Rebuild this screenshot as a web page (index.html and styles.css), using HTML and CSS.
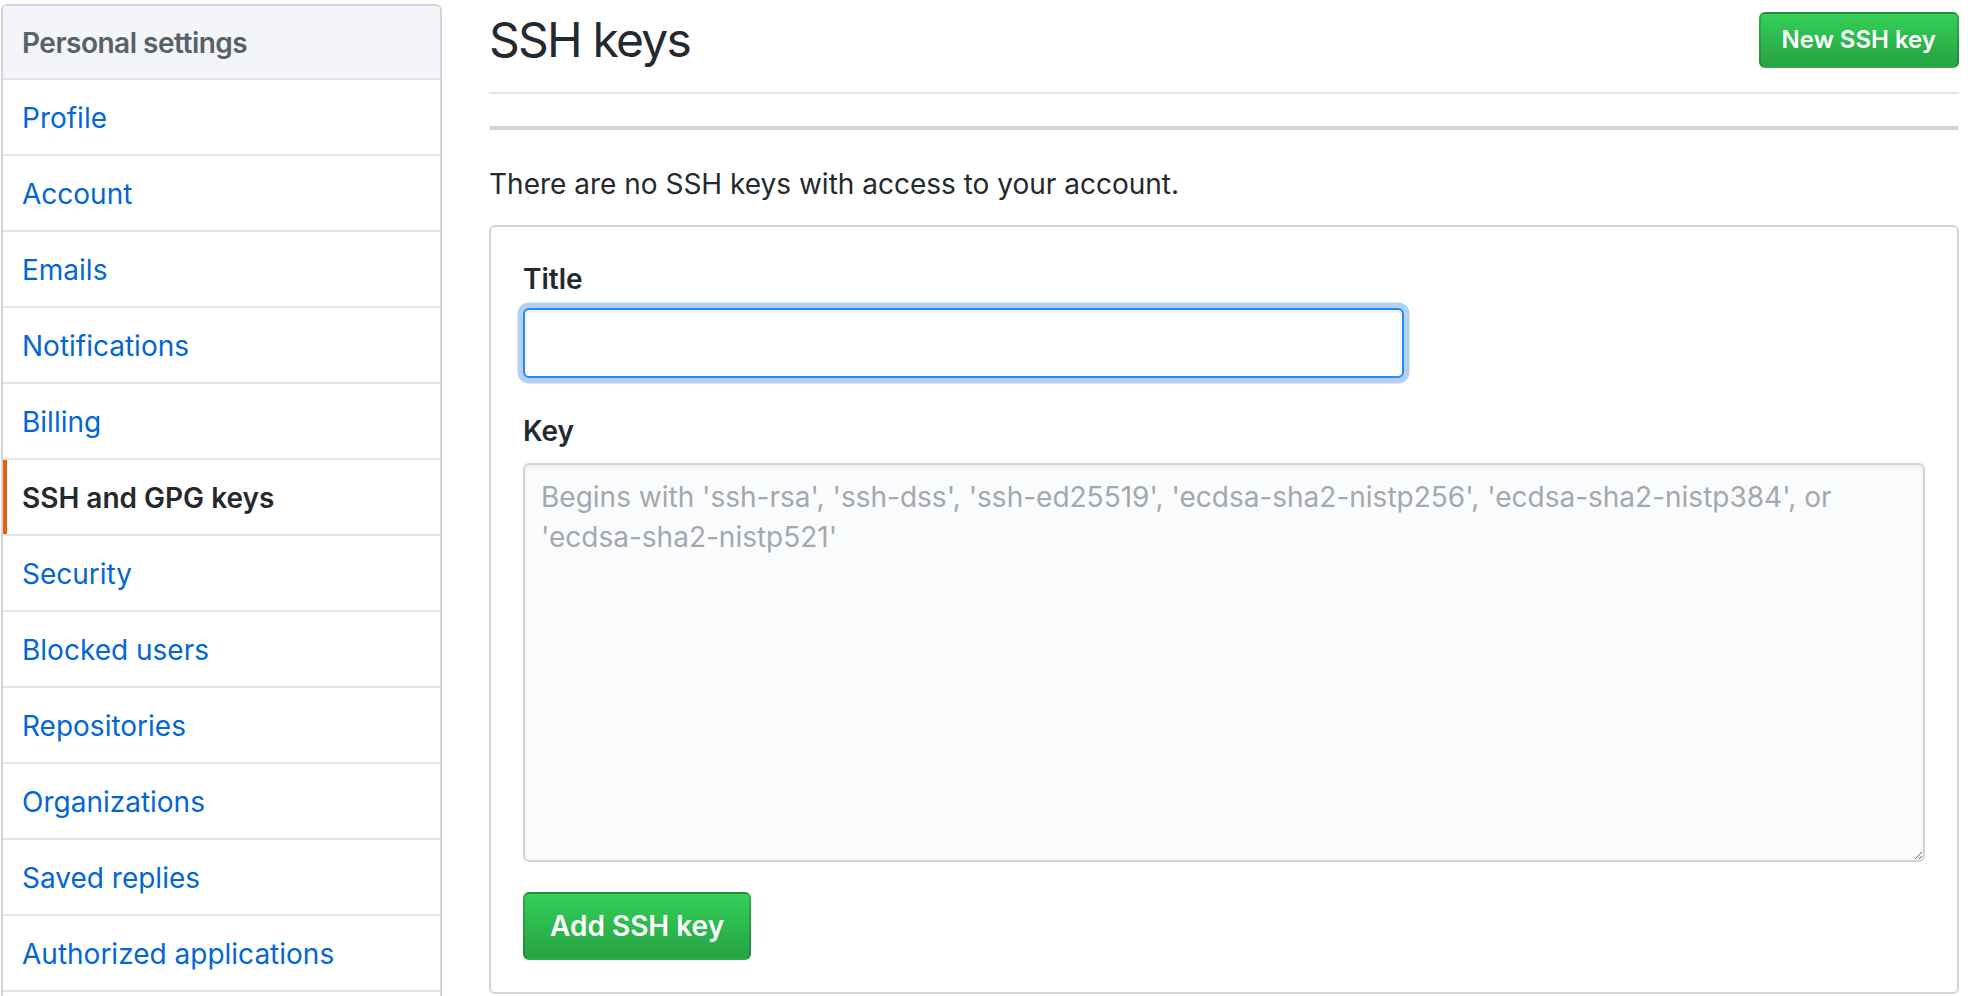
FILE: index.html
```html
<!DOCTYPE html>
<html lang="en">
<head>
<meta charset="utf-8">
<title>SSH keys</title>
<link rel="stylesheet" href="styles.css">
</head>
<body>
<div class="page">
  <nav class="sidebar">
    <h3 class="menu-heading">Personal settings</h3>
    <a class="menu-item" href="#">Profile</a>
    <a class="menu-item" href="#">Account</a>
    <a class="menu-item" href="#">Emails</a>
    <a class="menu-item" href="#">Notifications</a>
    <a class="menu-item" href="#">Billing</a>
    <a class="menu-item selected" href="#">SSH and GPG keys</a>
    <a class="menu-item" href="#">Security</a>
    <a class="menu-item" href="#">Blocked users</a>
    <a class="menu-item" href="#">Repositories</a>
    <a class="menu-item" href="#">Organizations</a>
    <a class="menu-item" href="#">Saved replies</a>
    <a class="menu-item" href="#">Authorized applications</a>
  </nav>
  <main class="main">
    <div class="subhead">
      <h2 class="subhead-heading">SSH keys</h2>
      <a class="btn btn-sm" href="#">New SSH key</a>
    </div>
    <div class="listgroup"></div>
    <p class="blank-note">There are no SSH keys with access to your account.</p>
    <form class="box">
      <div class="form-group">
        <label class="form-label" for="title">Title</label>
        <input class="form-control focused" id="title" type="text">
      </div>
      <div class="form-group">
        <label class="form-label key-label" for="key">Key</label>
        <textarea class="form-textarea" id="key" placeholder="Begins with 'ssh-rsa', 'ssh-dss', 'ssh-ed25519', 'ecdsa-sha2-nistp256', 'ecdsa-sha2-nistp384', or 'ecdsa-sha2-nistp521'"></textarea>
      </div>
      <button class="btn btn-lg" type="button">Add SSH key</button>
    </form>
  </main>
</div>
</body>
</html>
```
FILE: styles.css
```css
html, body {
  margin: 0;
  height: 100%;
  overflow: hidden;
  background: #fff;
}

body {
  font-family: Inter, "Liberation Sans", sans-serif;
  font-size: 28px;
  line-height: 1.5;
  color: #24292e;
}

.page {
  display: flex;
  align-items: flex-start;
  gap: 47px;
  padding: 4px 9px 0 1px;
}

/* Sidebar */
.sidebar {
  flex: none;
  width: 441px;
  box-sizing: border-box;
  border: 2px solid #d1d5da;
  border-radius: 6px;
  padding-bottom: 60px;
}

.menu-heading {
  margin: 0;
  padding: 17px 19px 15px;
  font-size: 28px;
  line-height: 40px;
  font-weight: 600;
  letter-spacing: -0.5px;
  color: #586069;
  background: #f3f5f8;
  border-bottom: 2px solid #e1e4e8;
  border-radius: 4px 4px 0 0;
}

.menu-item {
  display: block;
  position: relative;
  padding: 17px 19px 15px;
  line-height: 42px;
  color: #0366d6;
  text-decoration: none;
  border-bottom: 2px solid #e1e4e8;
}

.menu-item.selected {
  font-weight: 600;
  color: #24292e;
}

.menu-item.selected::before {
  content: "";
  position: absolute;
  left: 0;
  top: 0;
  bottom: 0;
  width: 4px;
  background: #e36209;
}

/* Main */
.main {
  flex: 1;
  min-width: 0;
}

.subhead {
  display: flex;
  align-items: center;
  padding-bottom: 16px;
  margin-bottom: 32px;
  border-bottom: 2px solid #e1e4e8;
}

.subhead-heading {
  flex: 1;
  margin: 0;
  font-size: 48px;
  line-height: 72px;
  font-weight: 400;
  letter-spacing: -1.8px;
}

.listgroup {
  height: 4px;
  background: #d1d5da;
  border-radius: 3px;
}

.blank-note {
  margin: 33px 0 20px;
  line-height: 42px;
}

.btn {
  display: inline-block;
  box-sizing: border-box;
  font-family: inherit;
  font-weight: 600;
  color: #fff;
  text-decoration: none;
  background-image: linear-gradient(-180deg, #34d058 0%, #28a745 90%);
  border: 2px solid rgba(27, 31, 35, 0.2);
  border-radius: 6px;
  cursor: pointer;
  white-space: nowrap;
}

.btn-sm {
  padding: 6px 21px;
  font-size: 24px;
  line-height: 40px;
}

.btn-lg {
  padding: 12px 25px;
  font-size: 28px;
  line-height: 40px;
  margin-top: 30px;
}

.box {
  border: 2px solid #d1d5da;
  border-radius: 6px;
  padding: 32px;
}

.form-group {
  display: flex;
  flex-direction: column;
  align-items: flex-start;
}

.form-group + .form-group {
  margin-top: 33px;
}

.form-label {
  font-weight: 600;
  line-height: 40px;
  margin-bottom: 9px;
}

.key-label {
  margin-bottom: 12px;
}

.form-control {
  box-sizing: border-box;
  width: 881px;
  height: 70px;
  padding: 12px 16px;
  font-family: inherit;
  font-size: 28px;
  background: #fff;
  border: 2px solid #d1d5da;
  border-radius: 6px;
  box-shadow: inset 0 2px 4px rgba(27, 31, 35, 0.075);
  outline: none;
}

.form-control.focused {
  border-color: #2188ff;
  box-shadow: inset 0 2px 4px rgba(27, 31, 35, 0.075), 0 0 0 5.6px rgba(3, 102, 214, 0.3);
}

.form-textarea {
  box-sizing: border-box;
  width: 100%;
  height: 399px;
  padding: 12px 16px;
  font-family: inherit;
  font-size: 28px;
  line-height: 40px;
  color: #24292e;
  background: #fafbfc;
  border: 2px solid #d1d5da;
  border-radius: 6px;
  box-shadow: inset 0 2px 4px rgba(27, 31, 35, 0.075);
  outline: none;
}

.form-textarea::placeholder {
  color: #a3a8ae;
  opacity: 1;
}
```
